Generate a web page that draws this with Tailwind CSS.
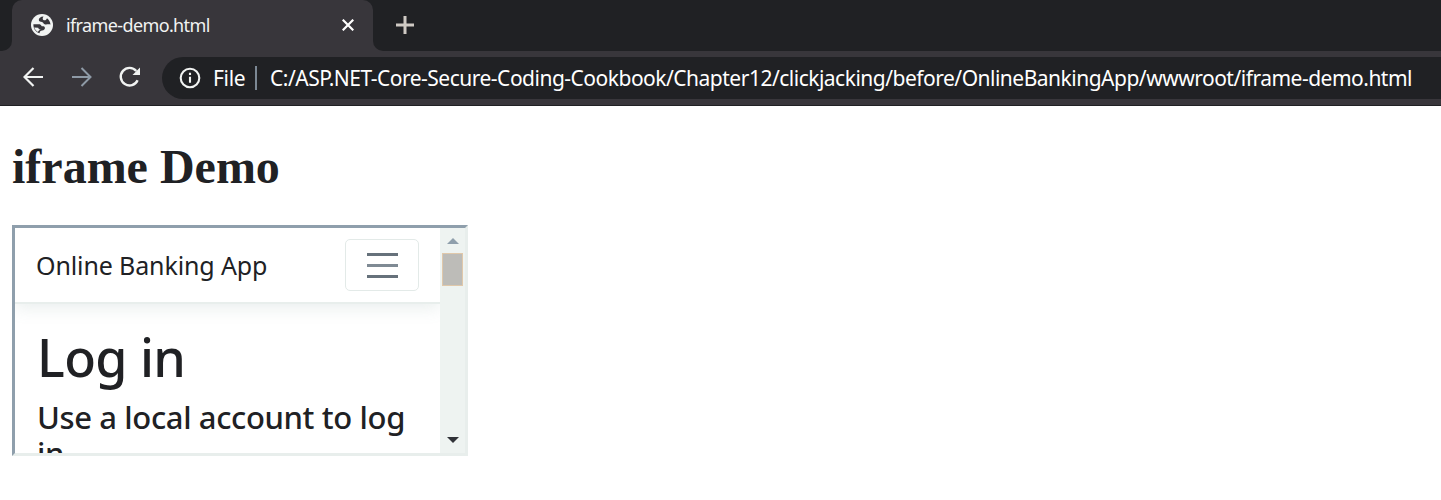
<!DOCTYPE html>
<html lang="en">
<head>
<meta charset="utf-8">
<title>iframe-demo.html</title>
<script src="https://cdn.jsdelivr.net/npm/@tailwindcss/browser@4"></script>
</head>
<body class="h-[500px] w-[1441px] overflow-hidden bg-white font-['Noto_Sans',sans-serif] text-[#202124]">
<header class="h-[106px] border-b border-[#202124] bg-[#38363b]">
  <div class="flex h-[51px]">
    <div class="w-3 bg-[#38363b]"><div class="h-full rounded-br-[10px] bg-[#202124]"></div></div>
    <div class="bg-[#202124]">
      <div class="flex h-[51px] w-[361px] items-center rounded-t-[10px] bg-[#38363b] pb-[2px] pl-[19px]">
        <svg class="h-[22px] w-[22px] shrink-0" viewBox="0 0 22 22"><circle cx="11" cy="11" r="11" fill="#f1f3f2"/><path d="M12.500 2.400C9.500 2.600 7.600 4 7.800 6c.2 1.600 1.700 1.700 3.200 1.900 1.500.3 1.200 1.900 2.600 2.400 1.900.6 3.200-.4 5.900.1C19.300 8 18 5.600 16 4.200c-.5 1.500-1.600 2.400-3.100 2-1.500-.5-1.600-2.100-.4-3.800zM2.400 10.200c-.2 4.200 2.300 7.800 6.100 9 .2-1.600 1-2.600 2.600-2.800 1.900-.2 3-1.300 2.800-2.700-.2-1.500-1.600-1.700-3.200-1.500-.9-1.700-1.700-2.200-3.500-2-1.700.2-2.700-.2-4.800 0zM3.200 13.600l4 .2c.5 1.500 1.500 1.700 2.600 1.900-1.500.4-2.300 1.100-2.900 2.200-1.900-1.100-3-2.500-3.700-4.300z" fill="#38363b" fill-rule="evenodd"/></svg>
        <span class="ml-[13px] w-[264px] whitespace-nowrap text-[18px] leading-6 tracking-[-0.62px] text-[#f1f3f2]">iframe-demo.html</span>
        <svg class="ml-3 h-3 w-3 shrink-0" viewBox="0 0 12 12" fill="none" stroke="#fff" stroke-width="2.200"><path d="M.7.7l10.600 10.600M11.300.7.7 11.300"/></svg>
      </div>
    </div>
    <div class="flex-1 bg-[#38363b]"><div class="flex h-full items-center rounded-bl-[10px] bg-[#202124] pb-[2px] pl-[23px]"><svg class="h-[18px] w-[18px]" viewBox="0 0 18 18" stroke="#cfcac4" stroke-width="3"><path d="M9 0v18M0 9h18"/></svg></div></div>
  </div>
  <div class="flex h-[54px] items-center pl-[23px]">
    <svg class="mb-[2px] h-[20px] w-[20px] shrink-0" viewBox="0 0 20 20" fill="none" stroke="#f1f3f2" stroke-width="2.200"><path d="M20 10H1.500M10.500 1l-9 9 9 9"/></svg>
    <svg class="mb-[2px] ml-[29px] h-[20px] w-[20px] shrink-0" viewBox="0 0 20 20" fill="none" stroke="#8e9aa6" stroke-width="2"><path d="M0 10h18.500M9.500 1l9 9-9 9"/></svg>
    <svg class="mb-[2px] ml-[27px] h-[22px] w-[22px] shrink-0" viewBox="0 0 22 22"><path d="M17.300 5A8.800 8.800 0 1 0 18.600 14.300" fill="none" stroke="#f1f3f2" stroke-width="2.400"/><path d="M21 1.500v7.500h-7.500z" fill="#f1f3f2"/></svg>
    <div class="ml-[21px] flex h-[42px] flex-1 items-center rounded-l-full bg-[#202124] pl-[17px] text-white">
      <svg class="h-[22px] w-[22px] shrink-0" viewBox="0 0 22 22" fill="none" stroke="#f1f3f2" stroke-width="2.100"><circle cx="11" cy="11" r="9.300"/><path d="M11 9.700v6M11 5.700v2.200"/></svg>
      <span class="ml-[12px] w-[42px] shrink-0 text-[21px] leading-6 tracking-[-0.3px]">File</span>
      <span class="h-6 w-[2px] bg-[#7c8894]"></span>
      <span class="ml-[13px] whitespace-nowrap text-[21px] leading-6 tracking-[-0.5px]">C:/ASP.NET-Core-Secure-Coding-Cookbook/Chapter12/clickjacking/before/OnlineBankingApp/wwwroot/iframe-demo.html</span>
    </div>
  </div>
</header>
<main class="pl-3 pt-[33px]">
  <h1 class="h-[86px] whitespace-nowrap font-['Liberation_Serif',serif] text-[48px] font-bold leading-[56px]">iframe Demo</h1>
  <div class="flex h-[231px] w-[456px] border-[3px] border-b-[#e8eeec] border-l-[#8f9fac] border-r-[#e8eeec] border-t-[#8f9fac]">
    <div class="w-[425px] overflow-hidden">
      <div class="flex h-[76px] items-center border-b-2 border-[#e8eeec] pl-[21px] shadow-[0_4px_16px_rgba(120,150,140,0.16)]">
        <span class="w-[309px] whitespace-nowrap text-[25px] leading-8 tracking-[-0.12px]">Online Banking App</span>
        <div class="flex h-[52px] w-[74px] flex-col items-center justify-center gap-2 rounded-[5px] border border-[#e3eae8]">
          <i class="h-[3px] w-[31px] bg-[#66717b]"></i><i class="h-[3px] w-[31px] bg-[#7f8a94]"></i><i class="h-[3px] w-[31px] bg-[#66717b]"></i>
        </div>
      </div>
      <div class="pl-[22px] pt-[22px]">
        <h2 class="whitespace-nowrap text-[52px] font-medium leading-[62px] tracking-[-0.6px]">Log in</h2>
        <p class="mt-[11px] whitespace-nowrap text-[31px] font-medium leading-[36px] tracking-[-0.37px]">Use a local account to log<br>in.</p>
      </div>
    </div>
    <div class="flex w-[25px] flex-col items-center bg-[#eef3f1] pt-[10px]">
      <svg class="h-[6px] w-[12px]" viewBox="0 0 12 6" fill="#8f9fac"><path d="M6 0l6 6H0z"/></svg>
      <div class="mt-[9px] h-[33px] w-[21px] border border-[#e0c8aa] bg-[#bdbcb8]"></div>
      <svg class="mt-auto mb-[10px] h-[6px] w-[12px]" viewBox="0 0 12 6" fill="#303238"><path d="M6 6l6-6H0z"/></svg>
    </div>
  </div>
</main>
</body>
</html>
